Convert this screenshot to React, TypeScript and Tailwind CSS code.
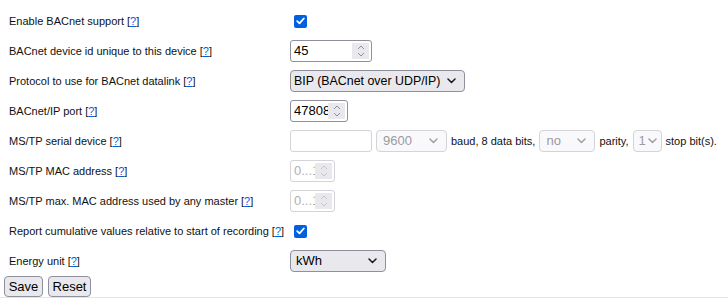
import React from "react";

const LABEL = "font-['Liberation_Sans',Arial,sans-serif] text-[11px] text-[#111]";
const FONT = "font-['Liberation_Sans',Arial,sans-serif]";
const CTRL = `${FONT} text-[13px]`;

function Help() {
  return (
    <span className="ml-[3px]">
      [<span className="text-[#0060df] underline">?</span>]
    </span>
  );
}

function Chevron({ color = "#1b1b1b" }: { color?: string }) {
  return (
    <svg width="9" height="6" viewBox="0 0 9 6" className="shrink-0">
      <path d="M1 1 L4.5 4.5 L8 1" fill="none" stroke={color} strokeWidth="1.5" strokeLinecap="round" strokeLinejoin="round" />
    </svg>
  );
}

function Spinner({ disabled }: { disabled?: boolean }) {
  const c = disabled ? "#c6c6cc" : "#8f8f9d";
  return (
    <div className="flex h-[16px] w-[17px] shrink-0 flex-col items-center justify-center gap-[2px] bg-[#e9e9ed]">
      <svg width="8" height="5" viewBox="0 0 8 5">
        <path d="M1 4 L4 1 L7 4" fill="none" stroke={c} strokeWidth="1" />
      </svg>
      <svg width="8" height="5" viewBox="0 0 8 5">
        <path d="M1 1 L4 4 L7 1" fill="none" stroke={c} strokeWidth="1" />
      </svg>
    </div>
  );
}

function NumberInput({ value, width, disabled }: { value: string; width: string; disabled?: boolean }) {
  return (
    <div
      className={`flex h-[22px] items-center overflow-hidden rounded-[3px] border bg-white pl-[3px] pr-[2px] ${width} ${
        disabled ? "border-[#d3d3d8]" : "border-[#8f8f9d]"
      }`}
    >
      <span className={`${CTRL} min-w-0 flex-1 overflow-hidden whitespace-nowrap ${disabled ? "text-[#b0b0b4]" : "text-black"}`}>
        {value}
      </span>
      <Spinner disabled={disabled} />
    </div>
  );
}

function Select({
  value,
  width,
  disabled,
  pl = "pl-[5px]",
  pr = "pr-[8px]",
  textCls = CTRL,
}: {
  value: string;
  width: string;
  disabled?: boolean;
  pl?: string;
  pr?: string;
  textCls?: string;
}) {
  return (
    <div
      className={`flex h-[22px] items-center justify-between rounded-[4px] border ${pl} ${pr} ${width} ${
        disabled ? "border-[#d3d3d8] bg-[#f9f9fb] text-[#9a9aa0]" : "border-[#8f8f9d] bg-[#e9e9ed] text-black"
      }`}
    >
      <span className={`${textCls} whitespace-nowrap`}>{value}</span>
      <Chevron color={disabled ? "#a0a0a6" : "#1b1b1b"} />
    </div>
  );
}

function Checkbox() {
  return (
    <div className="ml-[4px] flex h-[13px] w-[13px] items-center justify-center rounded-[2px] bg-[#0060df]">
      <svg width="9" height="8" viewBox="0 0 9 8">
        <path d="M1.2 4.2 L3.5 6.4 L7.8 1.5" fill="none" stroke="white" strokeWidth="1.8" strokeLinecap="round" strokeLinejoin="round" />
      </svg>
    </div>
  );
}

function Row({ label, children }: { label: string; children: React.ReactNode }) {
  return (
    <div className="flex h-[30px] items-center">
      <div className={`${LABEL} w-[290px] shrink-0 pl-[9px] whitespace-nowrap`}>
        {label}
        <Help />
      </div>
      <div className="flex items-center gap-[4px]">{children}</div>
    </div>
  );
}

export default function App() {
  return (
    <div className="h-[298px] w-[728px] overflow-hidden bg-white">
      <div className="pt-[6px]">
        <Row label="Enable BACnet support">
          <Checkbox />
        </Row>
        <Row label="BACnet device id unique to this device">
          <NumberInput value="45" width="w-[82px]" />
        </Row>
        <Row label="Protocol to use for BACnet datalink">
          <Select
            value="BIP (BACnet over UDP/IP)"
            width="w-[175px]"
            pl="pl-[3px]"
            textCls={`${FONT} text-[12.4px]`}
          />
        </Row>
        <Row label="BACnet/IP port">
          <NumberInput value="47808" width="w-[58px]" />
        </Row>
        <Row label="MS/TP serial device">
          <div className="h-[22px] w-[82px] rounded-[3px] border border-[#d3d3d8] bg-white" />
          <Select value="9600" width="w-[71px]" disabled pl="pl-[6px]" />
          <span className={LABEL}>baud, 8 data bits,</span>
          <Select value="no" width="w-[56px]" disabled pl="pl-[6px]" />
          <span className={LABEL}>parity,</span>
          <Select value="1" width="w-[29px]" disabled pl="pl-[5px]" pr="pr-[4px]" />
          <span className={LABEL}>stop bit(s).</span>
        </Row>
        <Row label="MS/TP MAC address">
          <NumberInput value="0...1" width="w-[45px]" disabled />
        </Row>
        <Row label="MS/TP max. MAC address used by any master">
          <NumberInput value="0...1" width="w-[45px]" disabled />
        </Row>
        <Row label="Report cumulative values relative to start of recording">
          <Checkbox />
        </Row>
        <Row label="Energy unit">
          <Select value="kWh" width="w-[96px]" />
        </Row>
      </div>
      <div className="flex h-[21px] gap-[5px] pl-[4px]">
        <button className={`${CTRL} h-[21px] w-[39px] rounded-[4px] border border-[#8f8f9d] bg-[#e9e9ed] leading-none text-black`}>
          Save
        </button>
        <button className={`${CTRL} h-[21px] w-[43px] rounded-[4px] border border-[#8f8f9d] bg-[#e9e9ed] leading-none text-black`}>
          Reset
        </button>
      </div>
      <div className="h-px bg-[#e5e5e5]" />
    </div>
  );
}
